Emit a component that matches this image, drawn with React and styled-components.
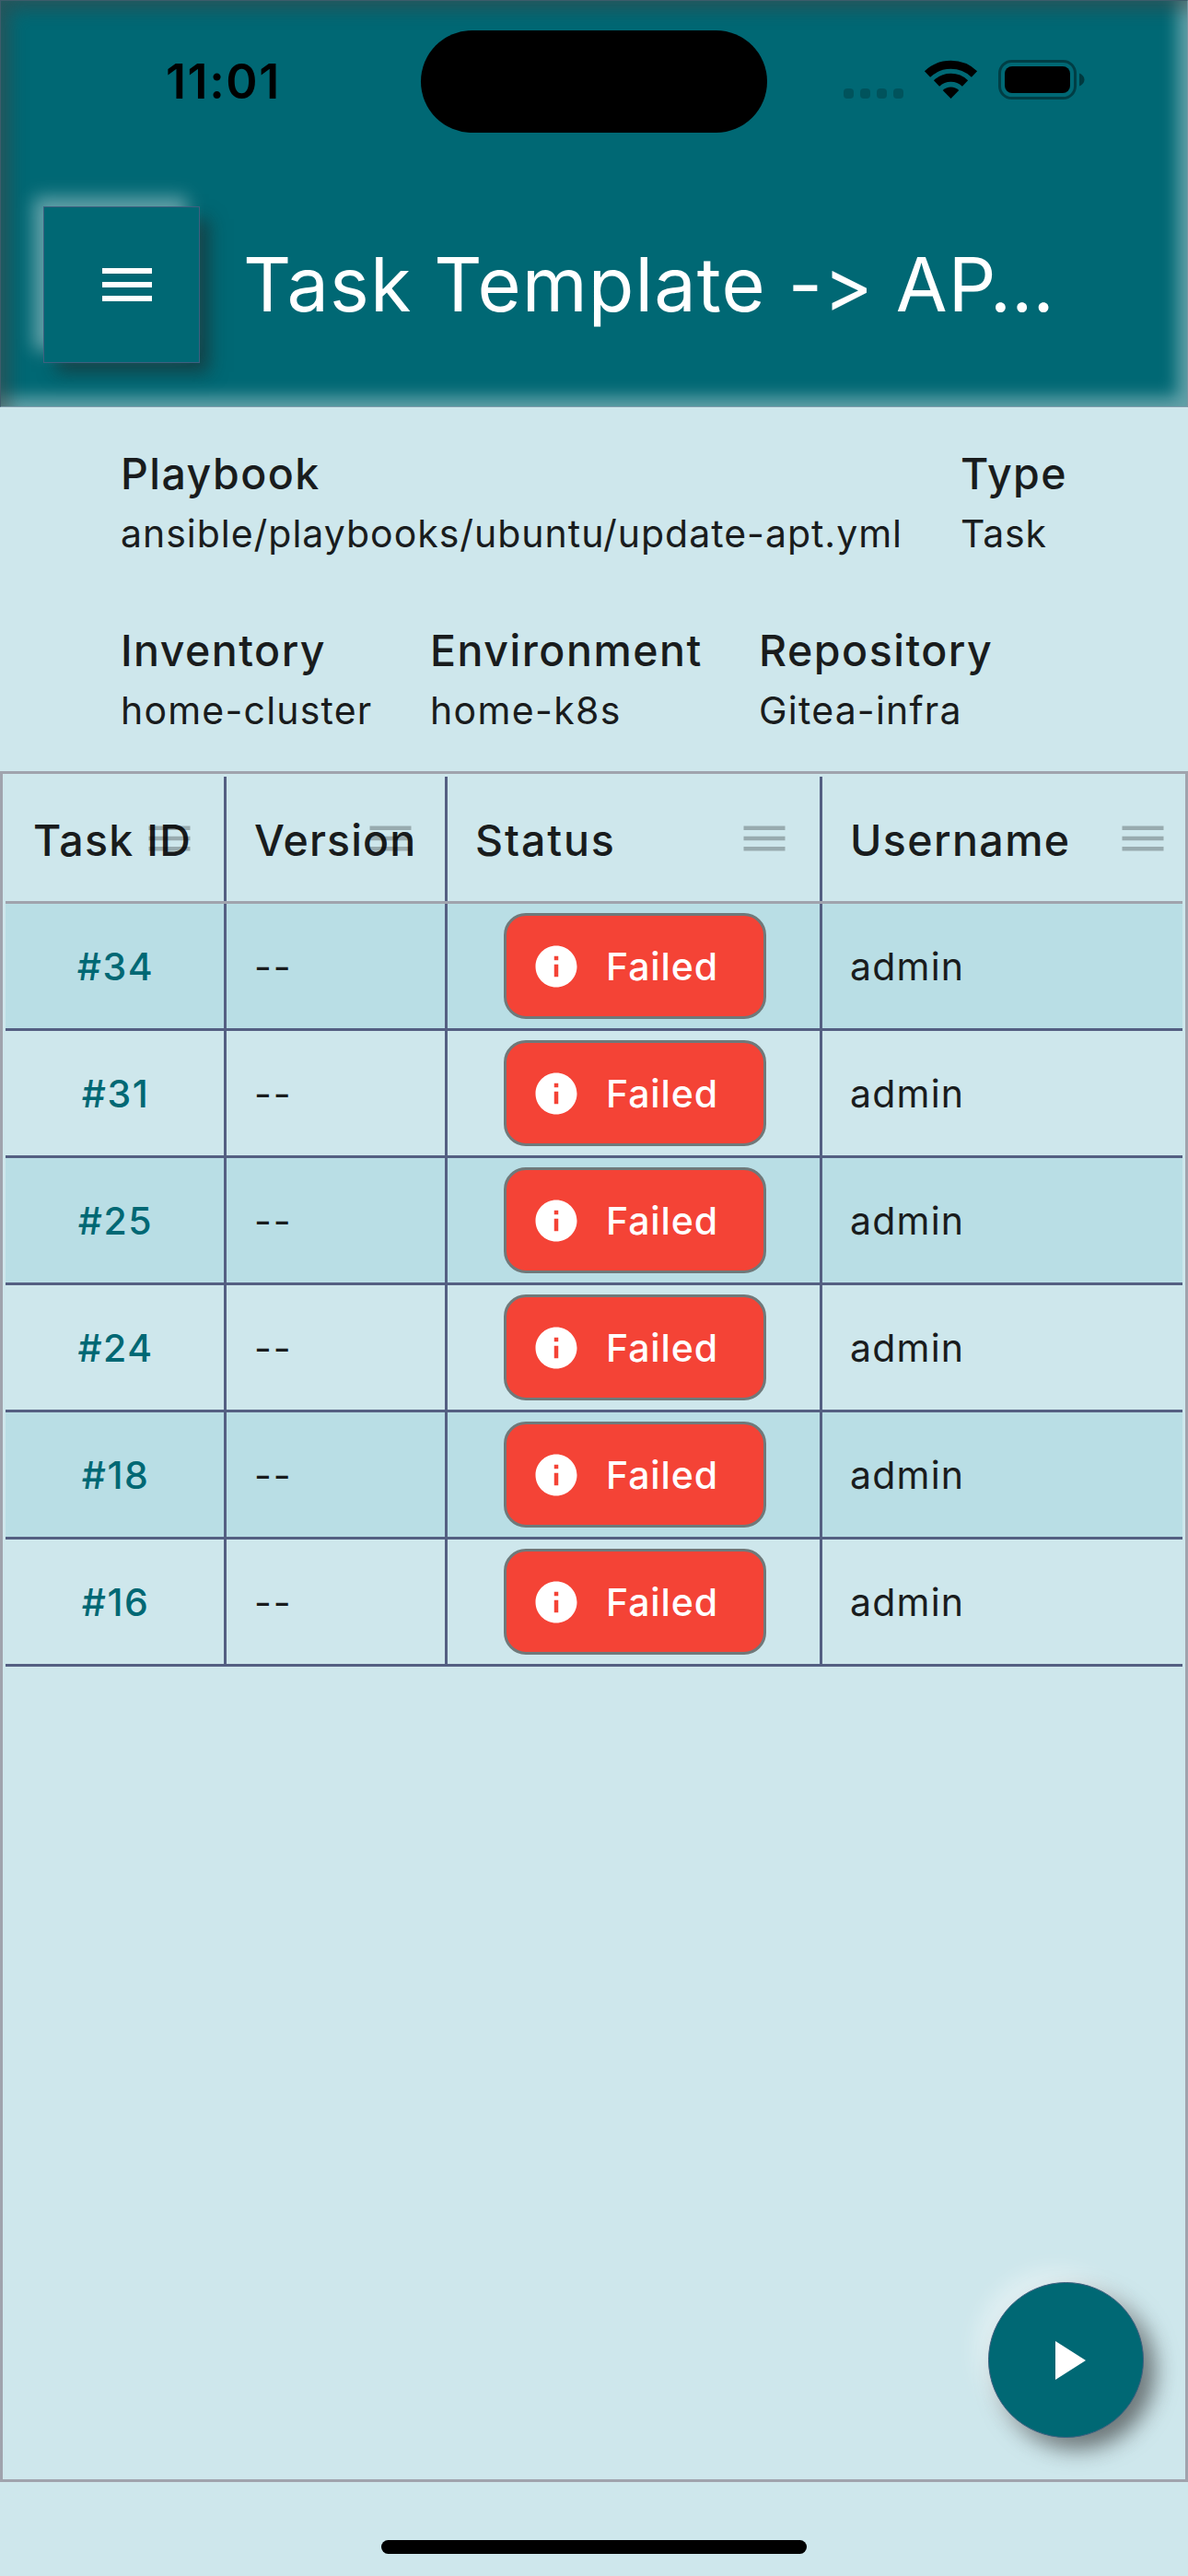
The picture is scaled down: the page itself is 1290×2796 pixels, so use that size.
import React from "react";
import styled, { createGlobalStyle } from "styled-components";

const Global = createGlobalStyle`
  * { box-sizing: border-box; }
  body { margin: 0; background: #cee7ec; }
`;

const Screen = styled.div`
  width: 1290px;
  height: 2796px;
  display: flex;
  flex-direction: column;
  background: #cee7ec;
  color: #191c1d;
  font-family: Inter, "Liberation Sans", sans-serif;
  overflow: hidden;
`;

const Header = styled.header`
  height: 442px;
  flex: none;
  background: #006874;
  border: 1px solid;
  border-color: #3d5c6b #7596a3 #7e9bab #3d5c6b;
  box-shadow:
    inset 12px 12px 18px -2px rgba(68, 68, 68, 0.5),
    inset -12px -12px 18px -2px rgba(255, 255, 255, 0.4);
`;

const StatusBar = styled.div`
  height: 176px;
  display: flex;
  align-items: flex-start;
  padding-left: 179px;
`;

const Time = styled.div`
  width: 277px;
  padding-top: 56px;
  font-size: 52px;
  line-height: 63px;
  font-weight: 600;
  letter-spacing: 1.6px;
  color: #000;
`;

const Island = styled.div`
  width: 376px;
  height: 111px;
  margin-top: 32px;
  border-radius: 56px;
  background: #000;
`;

const StatusIcons = styled.div`
  display: flex;
  padding: 64px 0 0 83px;
`;

const Toolbar = styled.div`
  height: 264px;
  display: flex;
  align-items: flex-start;
  padding: 47px 0 0 46px;
`;

const MenuButton = styled.button`
  width: 170px;
  height: 170px;
  flex: none;
  padding: 0 0 0 12px;
  display: flex;
  align-items: center;
  justify-content: center;
  color: #fff;
  background: #006874;
  border: 1px solid #3f6080;
  box-shadow:
    -12px -12px 18px -2px rgba(255, 255, 255, 0.4),
    12px 12px 18px -2px rgba(35, 35, 35, 0.55);
`;

const Title = styled.h1`
  margin: 36px 0 0 47px;
  font-size: 81px;
  line-height: 98px;
  font-weight: 400;
  letter-spacing: 1.1px;
  color: #fff;
  white-space: nowrap;
`;

const Info = styled.section`
  height: 395px;
  flex: none;
  padding: 40px 0 0 131px;
  display: flex;
  flex-direction: column;
  gap: 60px;
`;

const InfoRow = styled.div`
  display: flex;
  height: 132px;
`;

const Field = styled.div`
  width: ${(p) => p.$w}px;
  flex: none;
`;

const Label = styled.div`
  font-size: 46.5px;
  line-height: 64px;
  font-weight: 500;
  letter-spacing: ${(p) => p.$ls ?? 1.45}px;
  white-space: nowrap;
`;

const Value = styled.div`
  padding-top: 1px;
  font-size: 41px;
  line-height: 64px;
  font-weight: 400;
  letter-spacing: ${(p) => p.$ls ?? 1.2}px;
  white-space: nowrap;
`;

const Grid = styled.section`
  width: 1290px;
  height: 1857px;
  flex: none;
  position: relative;
  padding: 3px;
  border: 3px solid #a0a3ad;
`;

const Row = styled.div`
  display: grid;
  grid-template-columns: 240px 240px 407px 391px;
  height: 138px;
  background: ${(p) => (p.$shade ? "#b9dee5" : "transparent")};
  border-bottom: 3px solid ${(p) => (p.$head ? "#a0a3ad" : "#545f82")};
`;

const Cell = styled.div`
  position: relative;
  display: flex;
  align-items: center;
  justify-content: ${(p) => (p.$center ? "center" : "flex-start")};
  padding: 0 0 0 ${(p) => (p.$center ? 3 : 30)}px;
  border-right: ${(p) => (p.$last ? "none" : "3px solid #545f82")};
  font-size: 41px;
  letter-spacing: ${(p) => p.$ls ?? 1.2}px;
  white-space: nowrap;
`;

const HeadCell = styled(Cell)`
  font-size: 46.5px;
  font-weight: 500;
  padding: 2px 0 0 30px;
`;

const Handle = styled.svg`
  position: absolute;
  top: 41px;
  right: ${(p) => p.$right}px;
  fill: rgba(0, 0, 0, 0.26);
`;

const TaskLink = styled.a`
  padding-right: 1px;
  color: #006874;
  font-weight: 500;
  letter-spacing: 1.5px;
`;

const Badge = styled.div`
  width: 285px;
  height: 115px;
  display: flex;
  align-items: center;
  gap: 27px;
  padding-left: 27px;
  border: 3px solid #6f797a;
  border-radius: 24px;
  background: #f44336;
  color: #fff;
  font-weight: 500;
  letter-spacing: 0.9px;
`;

const Fab = styled.button`
  position: absolute;
  right: 45px;
  bottom: 45px;
  width: 169px;
  height: 169px;
  padding: 0;
  border-radius: 50%;
  border: 1px solid #3f6080;
  background: #006874;
  color: #fff;
  display: flex;
  align-items: center;
  justify-content: center;
  box-shadow:
    -12px -12px 24px rgba(255, 255, 255, 0.42),
    12px 12px 24px rgba(35, 35, 35, 0.6);
`;

const Footer = styled.footer`
  flex: 1;
  display: flex;
  justify-content: center;
  align-items: flex-end;
  padding-bottom: 24px;
`;

const HomeBar = styled.div`
  width: 462px;
  height: 15px;
  border-radius: 8px;
  background: #000;
`;

const headers = [
  { name: "Task ID", right: 32, spacing: 1.3 },
  { name: "Version", right: 32, spacing: 1.1 },
  { name: "Status", right: 33, spacing: 1.9 },
  { name: "Username", right: 16, spacing: 1.4 },
];
const tasks = ["#34", "#31", "#25", "#24", "#18", "#16"];

function Icon({ d, size }) {
  return (
    <svg width={size} height={size} viewBox="0 0 24 24" fill="currentColor">
      <path d={d} />
    </svg>
  );
}

function Indicators() {
  return (
    <svg width="264" height="44" viewBox="0 0 264 44">
      {[0, 18, 36, 54].map((x) => (
        <rect key={x} x={x} y="31" width="11" height="11" rx="4" fill="rgba(0,0,0,.2)" />
      ))}
      <g transform="translate(88 0)" fill="none" stroke="#000">
        <path d="M3 15.5A37 37 0 0 1 54 15.5" strokeWidth="9" />
        <path d="M13 25.5A22.5 22.5 0 0 1 44 25.5" strokeWidth="9" />
        <path d="M28.5 42L19.7 33.1A12.5 12.5 0 0 1 37.3 33.1Z" fill="#000" stroke="none" />
      </g>
      <rect x="169.5" y="1.5" width="82" height="40" rx="13" fill="none" stroke="rgba(0,0,0,.4)" strokeWidth="3" />
      <rect x="175" y="7" width="71" height="29" rx="8" fill="#000" />
      <path d="M256 14.5c3.5 1.5 5.500 4 5.500 7s-2 5.500-5.500 7z" fill="rgba(0,0,0,.45)" />
    </svg>
  );
}

export default function App() {
  return (
    <Screen>
      <Global />
      <Header>
        <StatusBar>
          <Time>11:01</Time>
          <Island />
          <StatusIcons>
            <Indicators />
          </StatusIcons>
        </StatusBar>
        <Toolbar>
          <MenuButton aria-label="Menu">
            <Icon size={72} d="M3 18h18v-2H3v2zm0-5h18v-2H3v2zm0-7v2h18V6H3z" />
          </MenuButton>
          <Title>Task Template -&gt; AP…</Title>
        </Toolbar>
      </Header>
      <Info>
        <InfoRow>
          <Field $w={912}>
            <Label>Playbook</Label>
            <Value $ls={0.98}>ansible/playbooks/ubuntu/update-apt.yml</Value>
          </Field>
          <Field $w={200}>
            <Label>Type</Label>
            <Value $ls={0.8}>Task</Value>
          </Field>
        </InfoRow>
        <InfoRow>
          <Field $w={336}>
            <Label>Inventory</Label>
            <Value>home-cluster</Value>
          </Field>
          <Field $w={357}>
            <Label $ls={1.5}>Environment</Label>
            <Value $ls={1.35}>home-k8s</Value>
          </Field>
          <Field $w={300}>
            <Label $ls={1.5}>Repository</Label>
            <Value>Gitea-infra</Value>
          </Field>
        </InfoRow>
      </Info>
      <Grid>
        <Row $head>
          {headers.map((h, i) => (
            <HeadCell key={h.name} $last={i === 3} $ls={h.spacing}>
              {h.name}
              <Handle $right={h.right} width="54" height="54" viewBox="0 0 24 24">
                <path d="M2 15.500v2h20v-2H2zm0-5v2h20v-2H2zm0-5v2h20v-2H2z" />
              </Handle>
            </HeadCell>
          ))}
        </Row>
        {tasks.map((id, i) => (
          <Row key={id} $shade={i % 2 === 0}>
            <Cell $center>
              <TaskLink>{id}</TaskLink>
            </Cell>
            <Cell $ls={2}>--</Cell>
            <Cell $center>
              <Badge>
                <Icon
                  size={54}
                  d="M12 2C6.480 2 2 6.480 2 12s4.480 10 10 10 10-4.480 10-10S17.520 2 12 2zm1 15h-2v-6h2v6zm0-8h-2V7h2v2z"
                />
                Failed
              </Badge>
            </Cell>
            <Cell $last>admin</Cell>
          </Row>
        ))}
        <Fab aria-label="Run">
          <Icon size={72} d="M8 5v14l11-7z" />
        </Fab>
      </Grid>
      <Footer>
        <HomeBar />
      </Footer>
    </Screen>
  );
}
